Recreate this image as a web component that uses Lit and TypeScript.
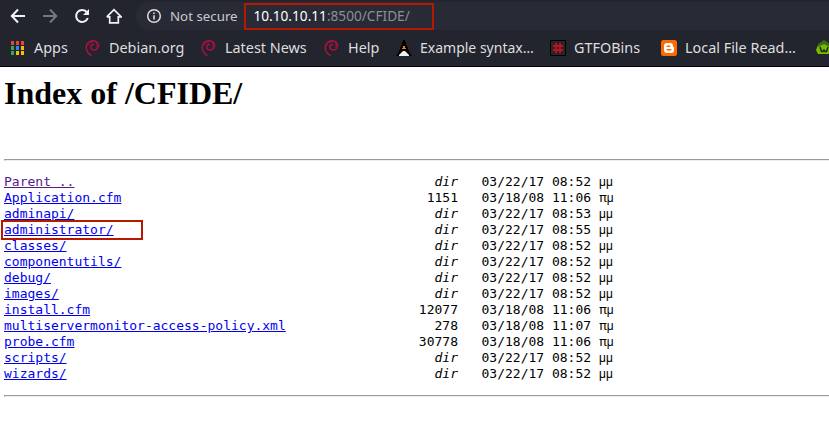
import { LitElement, html, css, svg } from "lit";
import { customElement } from "lit/decorators.js";

type Entry = [name: string, size: string, date: string, mark: string];

const ENTRIES: Entry[] = [
  ["Parent ..", "dir", "03/22/17 08:52", "μμ"],
  ["Application.cfm", "1151", "03/18/08 11:06", "πμ"],
  ["adminapi/", "dir", "03/22/17 08:53", "μμ"],
  ["administrator/", "dir", "03/22/17 08:55", "μμ"],
  ["classes/", "dir", "03/22/17 08:52", "μμ"],
  ["componentutils/", "dir", "03/22/17 08:52", "μμ"],
  ["debug/", "dir", "03/22/17 08:52", "μμ"],
  ["images/", "dir", "03/22/17 08:52", "μμ"],
  ["install.cfm", "12077", "03/18/08 11:06", "πμ"],
  ["multiservermonitor-access-policy.xml", "278", "03/18/08 11:07", "πμ"],
  ["probe.cfm", "30778", "03/18/08 11:06", "πμ"],
  ["scripts/", "dir", "03/22/17 08:52", "μμ"],
  ["wizards/", "dir", "03/22/17 08:52", "μμ"],
];

const icon = (body: unknown, cls = "") =>
  html`<svg class="icon ${cls}" viewBox="0 0 16 16" width="16" height="16">${body}</svg>`;

const back = svg`<path d="M15 8H2.500M8 1.500L1.800 8 8 14.500" fill="none" stroke="currentColor" stroke-width="2"/>`;
const forward = svg`<path d="M1 8h12.500M8 1.500L14.200 8 8 14.500" fill="none" stroke="currentColor" stroke-width="2"/>`;
const reload = svg`<path d="M13 4.400A6 6 0 1 0 13.800 10" fill="none" stroke="currentColor" stroke-width="2"/><path d="M15 1v6H9z" fill="currentColor"/>`;
const home = svg`<path d="M3.700 8v6.800h8.600V8M.8 8.800L8 1.600l7.200 7.200H12M.8 8.800H4" fill="none" stroke="currentColor" stroke-width="1.700"/>`;
const info = svg`<circle cx="8" cy="8" r="6.300" fill="none" stroke="currentColor" stroke-width="1.500"/><path d="M8 7.200v4.200M8 4.400v1.600" stroke="currentColor" stroke-width="1.600"/>`;

const GRID = ["#ea4335", "#ea4335", "#ea4335", "#34a853", "#1a8cff", "#fbbc04", "#34a853", "#fbbc04", "#fbbc04"];
const apps = GRID.map(
  (c, i) => svg`<rect x=${2 + (i % 3) * 5} y=${1 + Math.floor(i / 3) * 5} width="3" height="4" fill=${c}/>`
);
const debian = svg`<path d="M7.500 15.700C4 13.500 2 10 2.300 6.800 2.700 3 5.700.8 9 .8c3.500 0 5.700 2.300 5.500 5-.2 2.400-2.300 4.400-4.800 4.200C7.500 9.800 6.400 8 7 6.300c.5-1.400 1.900-2 3.200-1.700" fill="none" stroke="#b80d43" stroke-width="1.400"/><path d="M3.800 5.500C4.500 3 7 1.700 9.500 2M12 2.500c1.300 1.300 1.500 3.400.4 4.900" fill="none" stroke="#b80d43" stroke-width=".9"/>`;
const lambda = svg`<path d="M7 0h2v2h1v3h1v2h1v3h1v2h1v2h1l1 2H0l1-2h1v-2h1v-2h1V7h1V5h1V2h1z" fill="#000"/><path d="M7 6h2v2h1v1H6V8h1z" fill="#ff7a00"/><path d="M3 16v-1l2-2 2-2h2l2 2 2 2v1z" fill="#eee"/>`;
const hash = svg`<path d="M.5.5h15v15H.5z" fill="#27272b" stroke="#000"/><path d="M6 3v10M10 3v10M3 6h10M3 10h10" stroke="#c4101c" stroke-width="1.800"/>`;
const blogger = svg`<rect width="16" height="16" rx="2.500" fill="#ff6a00"/><path d="M6 3h3.200C11 3 12 4.200 12 6c0 .8.300 1 1 1v3c0 2-1 3-3 3H6c-2 0-3-1-3-3V6c0-2 1-3 3-3z" fill="#fff"/><path d="M6.200 6.200h2.600M6.200 9.800h3.600" stroke="#ff6a00" stroke-width="1.500" stroke-linecap="round"/>`;
const hexagon = svg`<path d="M2 5l6-1 6 1 2 5-2 4H2l-2-4z" fill="#79b900"/><path d="M2 4l6-4 6 4v3L8 4 2 7z" fill="#3e6b1c"/><path d="M4 7l1.500 4.500H7L8 10l1 1.500h1.500L12 7" fill="none" stroke="#23252e" stroke-width="1.500"/>`;

const BOOKMARKS: [string, unknown, string][] = [
  ["Apps", apps, "b-apps"],
  ["Debian.org", debian, "b-debian"],
  ["Latest News", debian, "b-news"],
  ["Help", debian, "b-help"],
  ["Example syntax…", lambda, "b-example"],
  ["GTFOBins", hash, "b-gtfo"],
  ["Local File Read…", blogger, "b-local"],
  ["", hexagon, "b-last"],
];

@customElement("app-root")
export class AppRoot extends LitElement {
  static styles = css`
    :host {
      display: block;
      width: 829px;
      height: 434px;
      overflow: hidden;
      background: #fff;
      color: #000;
    }
    .chrome {
      box-sizing: border-box;
      height: 67px;
      background: #23252e;
      border-bottom: 1px solid #000;
      color: #dededf;
      font-family: "Noto Sans", sans-serif;
      overflow: hidden;
    }
    .icon { display: block; flex: none; }
    .toolbar {
      display: flex;
      align-items: center;
      height: 32px;
      padding-left: 10px;
    }
    .nav { display: flex; gap: 16px; color: #f2f2f2; }
    .off { color: #77787d; }
    .omnibox {
      display: flex;
      align-items: center;
      flex: 1;
      box-sizing: border-box;
      height: 28px;
      margin: 0 0 0 14px;
      padding-left: 10px;
      border-radius: 14px 0 0 14px;
      background: #282a35;
      font-size: 13.300px;
    }
    .secure { width: 67px; margin-left: 8px; white-space: nowrap; color: #c9cacd; line-height: 18px; }
    .url {
      box-sizing: border-box;
      width: 190px;
      height: 27px;
      margin: 1px 0 0 7px;
      padding-left: 7.500px;
      border: 2px solid #b51a00;
      font-size: 13.650px;
      line-height: 22px;
      color: #8d8f96;
      white-space: nowrap;
    }
    .url b { font-weight: 400; color: #fff; }
    .bookmarks { display: flex; height: 32px; align-items: center; padding-left: 9px; font-size: 14.400px; }
    .bookmark { display: flex; align-items: center; gap: 9px; flex: none; white-space: nowrap; }
    .bookmark span { line-height: 20px; }
    .b-apps { width: 75px; }
    .b-debian { width: 116px; }
    .b-news { width: 123px; }
    .b-help { width: 73px; }
    .b-example { width: 154px; font-size: 14px; gap: 8px; }
    .b-gtfo { width: 111px; gap: 8px; }
    .b-local { width: 155px; gap: 8px; }
    .page { padding: 0 0 0 4px; }
    h1 { margin: 0; padding-top: 8px; height: 84px; font: bold 32px/37px "Liberation Serif", serif; }
    hr { height: 0; margin: 0; border: 0; border-top: 1px solid #9a9a9a; border-bottom: 1px solid #eee; border-left: 1px solid #9a9a9a; }
    .listing {
      margin: 13px 0 13px;
      font: 13px/16px "DejaVu Sans Mono", monospace;
    }
    .row { display: grid; grid-template-columns: 364px 90px 117px auto; height: 16px; white-space: pre; }
    .size { text-align: right; }
    .date { padding-left: 23.500px; }
    .mark { padding-left: 24px; }
    .mu { font: 12px/1 "Liberation Sans", sans-serif; }
    a { color: #0000ee; text-decoration: underline; }
    a.visited { color: #551a8b; }
    .name { position: relative; }
    .outline {
      position: absolute;
      box-sizing: border-box;
      left: -3px;
      top: -2px;
      width: 142px;
      height: 20px;
      border: 2px solid #b51a00;
    }
  `;

  render() {
    return html`
      <header class="chrome">
        <div class="toolbar">
          <nav class="nav">${icon(back)}${icon(forward, "off")}${icon(reload)}${icon(home)}</nav>
          <div class="omnibox">
            ${icon(info)}<span class="secure">Not secure</span>
            <div class="url"><b>10.10.10.11</b>:8500/CFIDE/</div>
          </div>
        </div>
        <div class="bookmarks">
          ${BOOKMARKS.map(([label, mark, cls]) => html`<div class="bookmark ${cls}">${icon(mark)}<span>${label}</span></div>`)}
        </div>
      </header>
      <main class="page">
        <h1>Index of /CFIDE/</h1>
        <hr />
        <div class="listing">
          ${ENTRIES.map(
            ([name, size, date, mark], i) => html`<div class="row"
              ><span class="name"><a class=${i ? "" : "visited"}>${name}</a>${i === 3 ? html`<span class="outline"></span>` : ""}</span
              ><span class="size">${size === "dir" ? html`<i>dir</i>` : size}</span
              ><span class="date">${date}</span
              ><span class="mark">${[...mark].map((c) => (c === "μ" ? html`<span class="mu">μ</span>` : c))}</span
            ></div>`
          )}
        </div>
        <hr />
      </main>
    `;
  }
}
